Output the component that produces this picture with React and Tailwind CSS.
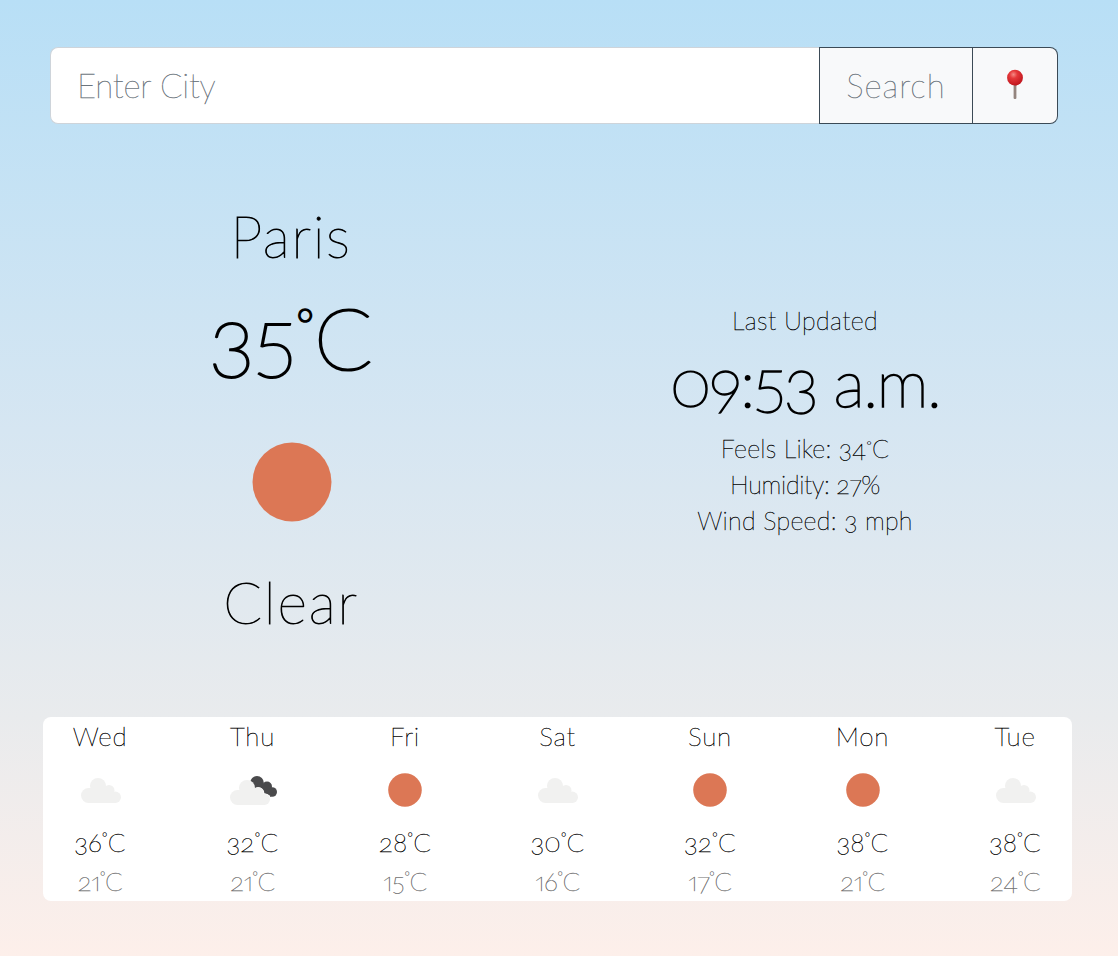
import React from 'react';

function Sun({ className }) {
  return (
    <svg viewBox="0 0 80 80" className={className}>
      <circle cx="40" cy="40" r="39.5" fill="#dc7755" />
    </svg>
  );
}

function CloudShape() {
  return (
    <g fill="#f1f1f0">
      <circle cx="17" cy="8" r="8" />
      <circle cx="7.5" cy="17.5" r="7.5" />
      <circle cx="28" cy="12.5" r="5.5" />
      <circle cx="34.3" cy="19.3" r="5.7" />
      <rect x="7.5" y="10" width="22" height="15" />
      <rect x="26" y="16" width="8.5" height="9" />
    </g>
  );
}

function Cloud() {
  return (
    <svg viewBox="0 0 40 25" className="ml-px h-[25px] w-10">
      <CloudShape />
    </svg>
  );
}

function BrokenClouds() {
  return (
    <svg viewBox="0 0 47 29" className="ml-px h-[29px] w-[47px]">
      <g fill="#4a4a4c">
        <circle cx="27" cy="6.8" r="6.8" />
        <circle cx="37" cy="10.5" r="5" />
        <circle cx="42.2" cy="16" r="4.8" />
        <path d="M27 8 L37 8 L44 14 L41 21 L28 14 Z" />
      </g>
      <circle cx="28.5" cy="17" r="5.8" fill="#fff" />
      <circle cx="35" cy="23.5" r="6" fill="#fff" />
      <g transform="translate(0 4)">
        <CloudShape />
      </g>
    </svg>
  );
}

function Pushpin() {
  return (
    <svg viewBox="0 0 18 32" className="-mt-0.5 h-8 w-[18px]">
      <defs>
        <radialGradient id="pin" cx="0.4" cy="0.3" r="0.7">
          <stop offset="0" stopColor="#f58a84" />
          <stop offset="0.35" stopColor="#e5383a" />
          <stop offset="1" stopColor="#bf151d" />
        </radialGradient>
      </defs>
      <rect x="7.6" y="15" width="2.8" height="15" rx="1" fill="#94857e" />
      <circle cx="9" cy="8.7" r="7.9" fill="url(#pin)" />
    </svg>
  );
}

function Temp({ value }) {
  return (
    <>
      {value}
      <span className="inline-block translate-y-[-0.68em] text-[0.5em] leading-none">°</span>C
    </>
  );
}

const days = [
  { day: 'Wed', icon: 'cloud', high: 36, low: 21 },
  { day: 'Thu', icon: 'broken', high: 32, low: 21 },
  { day: 'Fri', icon: 'sun', high: 28, low: 15 },
  { day: 'Sat', icon: 'cloud', high: 30, low: 16 },
  { day: 'Sun', icon: 'sun', high: 32, low: 17 },
  { day: 'Mon', icon: 'sun', high: 38, low: 21 },
  { day: 'Tue', icon: 'cloud', high: 38, low: 24 },
];

export default function App() {
  return (
    <div className="flex h-[956px] flex-col overflow-hidden bg-[linear-gradient(180deg,#b8dff6_0%,#d6e6f2_45%,#e9ebed_75%,#fdefea_100%)] font-['Lato',sans-serif] font-thin text-black [font-variant-numeric:oldstyle-nums_proportional-nums] [-webkit-text-stroke:0.4px]">
      <div className="mt-[47px] ml-[50px] flex h-[77px] w-[1008px] text-[33px]">
        <input
          placeholder="Enter City"
          className="min-w-0 flex-1 rounded-l-lg border border-r-0 border-[#ced4da] bg-white px-[26px] tracking-[-0.2px] outline-none placeholder:text-[#6c757d]"
        />
        <button className="w-[154px] border border-[#3b4a56] bg-[#f8f9fa] tracking-[1px] text-[#6c757d]">Search</button>
        <button className="flex w-[85px] items-center justify-center rounded-r-lg border border-l-0 border-[#3b4a56] bg-[#f8f9fa]">
          <Pushpin />
        </button>
      </div>

      <div className="mx-[34px] grid h-[593px] w-[1028px] grid-cols-2 text-center">
        <div className="flex flex-col items-center">
          <h1 className="mt-[78px] h-[68px] text-[57px] leading-[68px] tracking-[1.6px] [-webkit-text-stroke:0.9px]">Paris</h1>
          <div className="mt-[17px] h-[100px] text-[86px] leading-[100px] [-webkit-text-stroke:2.2px]">
            <Temp value={35} />
          </div>
          <Sun className="mt-[55px] ml-px size-20" />
          <h2 className="mt-[46px] h-[68px] text-[57px] leading-[68px] tracking-[1.8px] [-webkit-text-stroke:0.9px]">Clear</h2>
        </div>
        <div className="flex flex-col items-center text-[25px] leading-9">
          <p className="mt-[178px] tracking-[0.4px]">Last Updated</p>
          <p className="mt-[2px] h-[90px] text-[66px] leading-[84px] tracking-[-1.8px] [-webkit-text-stroke:1.6px]">09:53 a.m.</p>
          <p className="tracking-[0.2px]">
            Feels Like: <Temp value={34} />
          </p>
          <p className="tracking-[-0.3px]">Humidity: 27%</p>
          <p className="tracking-[0.3px]">Wind Speed: 3 mph</p>
        </div>
      </div>

      <div className="ml-[43px] flex h-[184px] w-[1029px] justify-between rounded-lg bg-white text-center text-[26px] leading-[39px]">
        {days.map(({ day, icon, high, low }) => (
          <div key={day} className="flex w-[114px] flex-col items-center">
            <div className="h-[39px] tracking-[0.7px]">{day}</div>
            <div className="flex h-[68px] items-center justify-center pt-px">
              {icon === 'sun' && <Sun className="size-[34px]" />}
              {icon === 'cloud' && <Cloud />}
              {icon === 'broken' && <BrokenClouds />}
            </div>
            <div className="tracking-[0.3px]">
              <Temp value={high} />
            </div>
            <div className="tracking-[-0.4px] text-[#6f6f6f]">
              <Temp value={low} />
            </div>
          </div>
        ))}
      </div>
    </div>
  );
}
